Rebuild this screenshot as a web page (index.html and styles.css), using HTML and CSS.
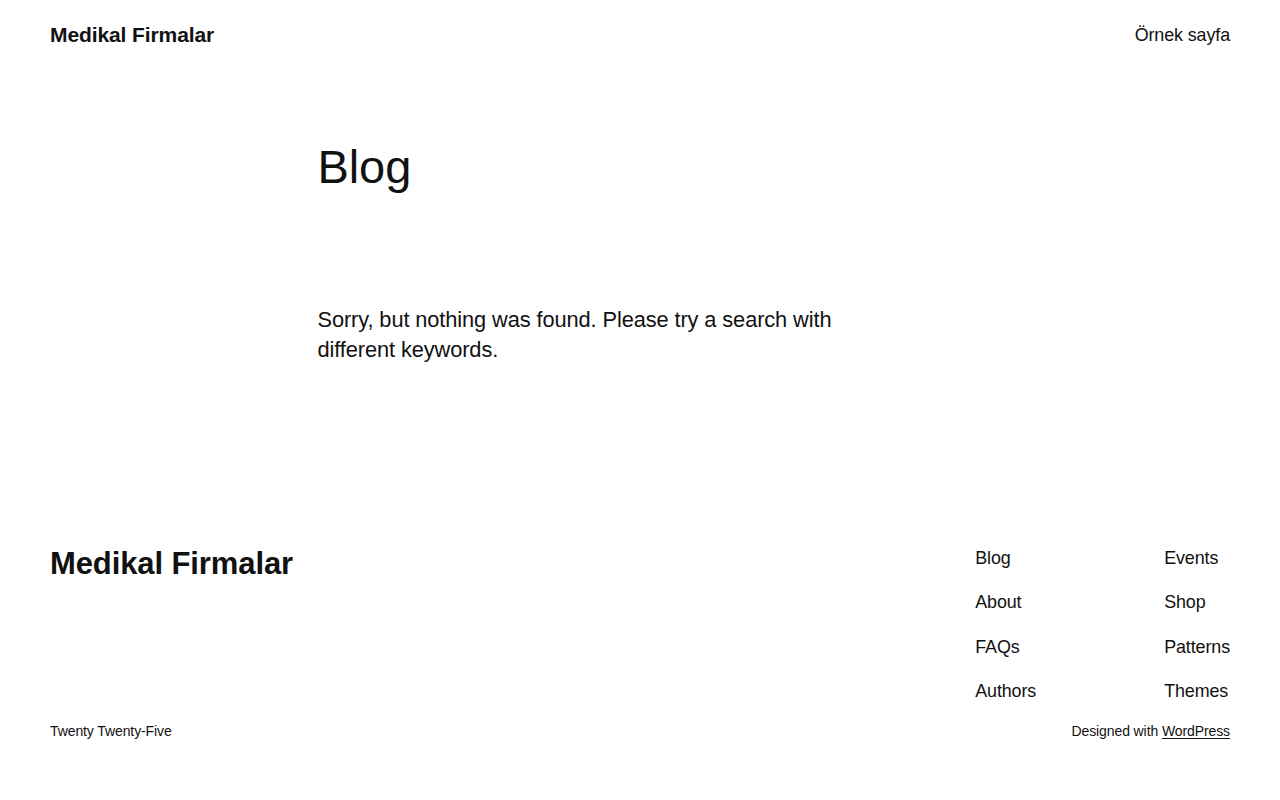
FILE: index.html
```html
<!doctype html>
<html lang="tr">
  <head>
    <meta charset="UTF-8" />
    <meta name="viewport" content="width=device-width, initial-scale=1.0" />
    <title>Blog – Medikal Firmalar</title>
    <link rel="stylesheet" href="styles.css">
  </head>
  <body>
    <header class="site-header">
      <a class="site-title" href="#">Medikal Firmalar</a>
      <nav class="header-nav">
        <a href="#">Örnek sayfa</a>
      </nav>
    </header>

    <main class="site-main">
      <h1 class="page-title">Blog</h1>
      <p class="no-results">Sorry, but nothing was found. Please try a search with different keywords.</p>
    </main>

    <footer class="site-footer">
      <div class="footer-top">
        <a class="footer-title" href="#">Medikal Firmalar</a>
        <div class="footer-navs">
          <ul class="footer-menu">
            <li><a href="#">Blog</a></li>
            <li><a href="#">About</a></li>
            <li><a href="#">FAQs</a></li>
            <li><a href="#">Authors</a></li>
          </ul>
          <ul class="footer-menu">
            <li><a href="#">Events</a></li>
            <li><a href="#">Shop</a></li>
            <li><a href="#">Patterns</a></li>
            <li><a href="#">Themes</a></li>
          </ul>
        </div>
      </div>
      <div class="footer-bottom">
        <span>Twenty Twenty-Five</span>
        <span>Designed with <a class="credit" href="#">WordPress</a></span>
      </div>
    </footer>
  </body>
</html>
```

FILE: styles.css
```css
body {
  margin: 0;
  background: #fff;
  color: #111111;
  font-family: "Liberation Sans", Arial, sans-serif;
  font-size: 17.9px;
  letter-spacing: -0.1px;
  line-height: 1.4;
}

a {
  color: inherit;
  text-decoration: none;
}

.site-header {
  display: flex;
  justify-content: space-between;
  align-items: center;
  padding: 20px 50px;
}

.site-title {
  font-size: 21px;
  font-weight: 700;
}

.header-nav {
  padding-top: 1px;
}

.header-nav a {
  font-size: 17.9px;
}

.site-main {
  max-width: 645px;
  margin: 0 auto;
  padding: 70px 0 180px;
}

.page-title {
  margin: 0;
  font-size: 47px;
  font-weight: 400;
  line-height: 1.2;
  letter-spacing: -0.1px;
}

.no-results {
  max-width: 560px;
  margin: 109px 0 0;
  font-size: 21.8px;
  line-height: 1.38;
}

.site-footer {
  padding: 0 50px 48px;
}

.footer-top {
  display: flex;
  justify-content: space-between;
  align-items: flex-start;
}

.footer-title {
  font-size: 31px;
  font-weight: 700;
  line-height: 1.2;
}

.footer-navs {
  display: flex;
  gap: 128px;
  margin-top: 1px;
}

.footer-menu {
  list-style: none;
  margin: 0;
  padding: 0;
  display: flex;
  flex-direction: column;
  gap: 19.3px;
}

.footer-menu a {
  font-size: 17.9px;
  line-height: 1.4;
}

.footer-bottom {
  display: flex;
  justify-content: space-between;
  margin-top: 18px;
  font-size: 14px;
}

.credit {
  text-decoration: underline;
  text-underline-offset: 2px;
}
```
